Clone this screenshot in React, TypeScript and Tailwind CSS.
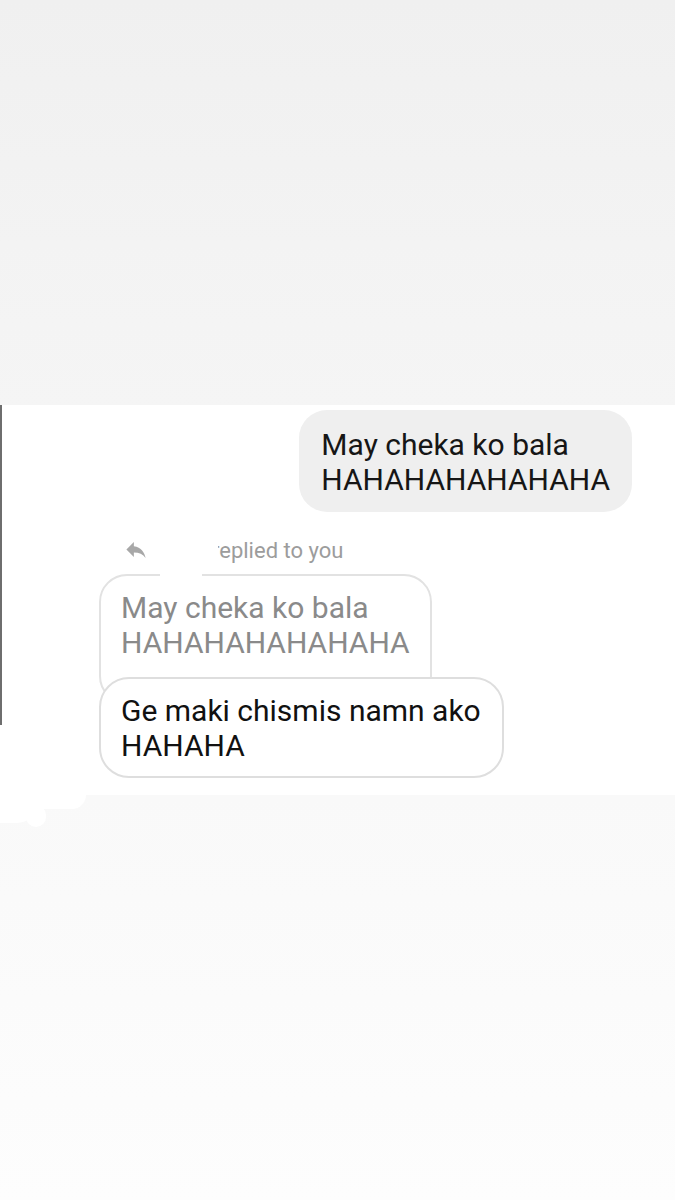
import React from "react";

const ReplyArrow = () => (
  <svg width="22" height="16" viewBox="3 5 18 15" fill="#a8a8a8">
    <path d="M10 9V5l-7 7 7 7v-4.1c5 0 8.5 1.6 11 5.1-1-5-4-10-11-11z" />
  </svg>
);

const App: React.FC = () => {
  return (
    <div
      className="flex flex-col w-[675px] h-[1200px] bg-white"
      style={{ fontFamily: "Roboto, 'Liberation Sans', sans-serif" }}
    >
      {/* gray area above */}
      <div className="h-[405px] bg-gradient-to-b from-[#f0f0f0] to-[#f5f5f5]" />

      {/* conversation */}
      <div className="relative h-[390px] bg-white flex">
        <div className="w-[2px] h-[320px] bg-[#6e6e6e]" />
        <div className="flex-1 flex flex-col">
          {/* sent message */}
          <div className="flex justify-end pr-[43px] pt-[5px]">
            <div className="bg-[#efefef] rounded-[28px] px-[22px] pt-[17px] pb-[15px] text-[30px] leading-[35px] text-[#161616]">
              <div>May cheka ko bala</div>
              <div>HAHAHAHAHAHAHA</div>
            </div>
          </div>

          {/* reply header */}
          <div className="relative flex items-center h-[24px] mt-[26px] pl-[123px]">
            <ReplyArrow />
            <span className="ml-[65px] text-[22px] text-[#9c9c9c]">
              replied to you
            </span>
            <div className="absolute left-[148px] top-[-4px] w-[68px] h-[50px] bg-white" />
          </div>

          {/* quoted + reply */}
          <div className="relative flex flex-col items-start pl-[97px] mt-[12px]">
            <div className="w-[333px] h-[130px] border-2 border-[#e2e2e2] rounded-[28px] bg-white pl-[20px] pt-[14px] text-[30px] leading-[35px] text-[#8a8a8a]">
              <div>May cheka ko bala</div>
              <div>HAHAHAHAHAHAHA</div>
            </div>
            <div className="absolute left-[158px] top-[-14px] w-[42px] h-[20px] bg-white" />
            <div className="relative mt-[-27px] w-[405px] h-[101px] border-2 border-[#dedede] rounded-[30px] bg-white pl-[20px] pt-[14px] text-[30px] leading-[35px] text-[#111111]">
              <div>Ge maki chismis namn ako</div>
              <div>HAHAHA</div>
            </div>
          </div>
        </div>
      </div>

      {/* lighter area below */}
      <div className="relative flex-1 bg-gradient-to-b from-[#f9f9f9] to-[#fdfdfd]">
        <div className="absolute left-0 top-0 w-[86px] h-[14px] bg-white rounded-br-[14px]" />
        <div className="absolute left-0 top-0 w-[40px] h-[28px] bg-white rounded-br-[24px]" />
        <div className="absolute left-[26px] top-[10px] w-[20px] h-[22px] bg-white rounded-full" />
      </div>
    </div>
  );
};

export default App;
